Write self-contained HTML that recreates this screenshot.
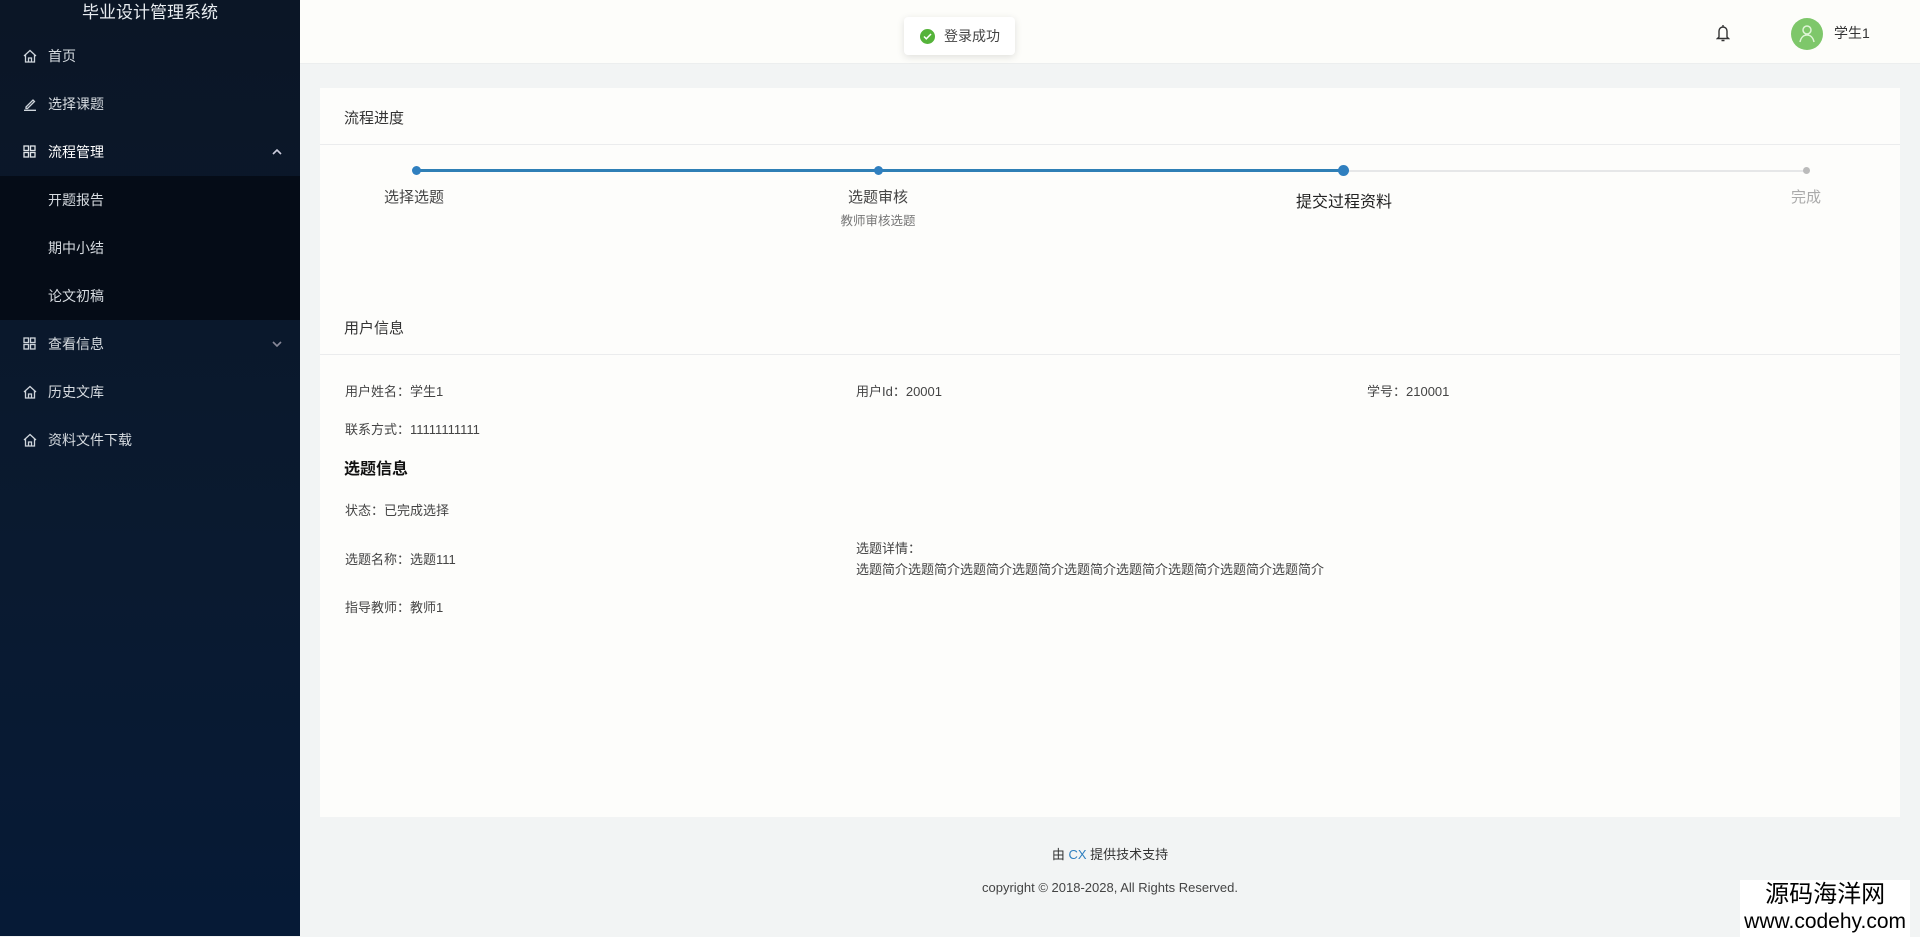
<!DOCTYPE html>
<html><head><meta charset="utf-8"><style>
*{margin:0;padding:0;box-sizing:border-box}
body{width:1920px;height:936px;overflow:hidden;font-family:"Liberation Sans","Noto Sans CJK SC",sans-serif;background:#f2f4f4;position:relative;color:#333}
.side{position:absolute;left:0;top:0;width:300px;height:936px;background:linear-gradient(180deg,#0b1626 0%,#0a1a30 60%,#061a36 100%)}
.title{position:absolute;top:0;left:0;width:300px;text-align:center;color:#e8ecf0;font-size:17px;line-height:26px}
.mi{position:absolute;left:0;width:300px;height:48px;line-height:48px;color:#d6dbe0;font-size:14px;padding-left:48px}
.mi svg{position:absolute;left:23px;top:17px}
.sub{position:absolute;left:0;top:176px;width:300px;height:144px;background:#050c17}
.mi svg.ar{left:auto;right:18px;top:21px}
.hdr{position:absolute;left:300px;top:0;width:1620px;height:64px;background:#fdfdfa;border-bottom:1px solid #eceeee}
.toast{position:absolute;left:904px;top:17px;width:111px;height:38px;background:#fff;box-shadow:0 2px 8px rgba(0,0,0,.12);border-radius:4px;font-size:14px;line-height:38px;padding-left:40px;color:#444}
.toast i{position:absolute;left:16px;top:12px;width:15px;height:15px;border-radius:50%;background:#55b33a}
.card{position:absolute;left:320px;top:88px;width:1580px;height:729px;background:#fdfdfb}
.t{position:absolute;font-size:15px;color:#333}
.hr{position:absolute;left:0;width:1580px;height:1px;background:#ebeced}
.dot{position:absolute;border-radius:50%;background:#2f7fbf}
.lbl{position:absolute;font-size:15px;color:#444;transform:translateX(-50%);white-space:nowrap}
.f{position:absolute;font-size:13px;color:#444;white-space:nowrap}
</style></head><body>
<div class="side">
<div class="title">毕业设计管理系统</div>
<div class="sub"></div>
<div class="mi" style="top:32px"><svg width="14" height="14" viewBox="0 0 14 14" fill="none" stroke="#cfd5dc" stroke-width="1.3"><path d="M1 7L7 1.5 13 7M2.5 5.8V13h9V5.8M5.5 13V9h3v4"/></svg>首页</div>
<div class="mi" style="top:80px"><svg width="14" height="14" viewBox="0 0 14 14" fill="none" stroke="#cfd5dc" stroke-width="1.3"><path d="M3 10L10 3l1.5 1.5L4.5 11.5H3zM1 13.3h12"/></svg>选择课题</div>
<div class="mi" style="top:128px;color:#fff"><svg width="13" height="13" viewBox="0 0 13 13" fill="none" stroke="#e0e4e8" stroke-width="1.3"><rect x="1" y="1" width="4.5" height="4.5"/><rect x="7.5" y="1" width="4.5" height="4.5"/><rect x="1" y="7.5" width="4.5" height="4.5"/><rect x="7.5" y="7.5" width="4.5" height="4.5"/></svg>流程管理<svg class="ar" width="10" height="6" viewBox="0 0 10 6" fill="none" stroke="#ccd" stroke-width="1.6"><path d="M1 5l4-4 4 4"/></svg></div>
<div class="mi" style="top:176px">开题报告</div>
<div class="mi" style="top:224px">期中小结</div>
<div class="mi" style="top:272px">论文初稿</div>
<div class="mi" style="top:320px"><svg width="13" height="13" viewBox="0 0 13 13" fill="none" stroke="#cfd5dc" stroke-width="1.3"><rect x="1" y="1" width="4.5" height="4.5"/><rect x="7.5" y="1" width="4.5" height="4.5"/><rect x="1" y="7.5" width="4.5" height="4.5"/><rect x="7.5" y="7.5" width="4.5" height="4.5"/></svg>查看信息<svg class="ar" width="10" height="6" viewBox="0 0 10 6" fill="none" stroke="#889" stroke-width="1.6"><path d="M1 1l4 4 4-4"/></svg></div>
<div class="mi" style="top:368px"><svg width="14" height="14" viewBox="0 0 14 14" fill="none" stroke="#cfd5dc" stroke-width="1.3"><path d="M1 7L7 1.5 13 7M2.5 5.8V13h9V5.8M5.5 13V9h3v4"/></svg>历史文库</div>
<div class="mi" style="top:416px"><svg width="14" height="14" viewBox="0 0 14 14" fill="none" stroke="#cfd5dc" stroke-width="1.3"><path d="M1 7L7 1.5 13 7M2.5 5.8V13h9V5.8M5.5 13V9h3v4"/></svg>资料文件下载</div>
</div>
<div class="hdr">
<svg style="position:absolute;left:1416px;top:24px" width="14" height="18" viewBox="0 0 14 18" fill="none" stroke="#333" stroke-width="1.4"><path d="M3 13V7a4 4 0 0 1 8 0v6l1.5 1.5h-11zM5.5 16.5h3M7 1v2"/></svg>
<div style="position:absolute;left:1491px;top:18px;width:32px;height:32px;border-radius:50%;background:#7ec76a"><svg width="32" height="32" viewBox="0 0 32 32" fill="none" stroke="#dff5d6" stroke-width="1.5"><circle cx="16" cy="12" r="4"/><path d="M9 24c1-5 4-7 7-7s6 2 7 7"/></svg></div>
<div style="position:absolute;left:1534px;top:23px;font-size:14px;color:#333">学生1</div>
</div>
<div class="toast"><i></i><svg style="position:absolute;left:19px;top:15px" width="9" height="9" viewBox="0 0 9 9" fill="none" stroke="#fff" stroke-width="1.5"><path d="M1 4.5l2.3 2.3L8 2"/></svg>登录成功</div>
<div class="card">
<div class="t" style="left:24px;top:19px">流程进度</div>
<div class="hr" style="top:56px"></div>
<div style="position:absolute;left:100px;top:81px;width:923px;height:3px;background:#2f7fb5"></div>
<div style="position:absolute;left:1027px;top:82px;width:459px;height:2px;background:#e6e7e8"></div>
<div class="dot" style="left:92px;top:78px;width:9px;height:9px"></div>
<div class="dot" style="left:554px;top:78px;width:9px;height:9px"></div>
<div class="dot" style="left:1018px;top:77px;width:11px;height:11px"></div>
<div class="dot" style="left:1483px;top:79px;width:7px;height:7px;background:#bbb"></div>
<div class="lbl" style="left:94px;top:98px">选择选题</div>
<div class="lbl" style="left:558px;top:98px">选题审核</div>
<div class="lbl" style="left:558px;top:122px;font-size:12.5px;color:#777">教师审核选题</div>
<div class="lbl" style="left:1024px;top:100px;color:#222;font-size:16px">提交过程资料</div>
<div class="lbl" style="left:1486px;top:98px;color:#aaa">完成</div>
<div class="t" style="left:24px;top:229px">用户信息</div>
<div class="hr" style="top:266px"></div>
<div class="f" style="left:25px;top:293px">用户姓名：学生1</div>
<div class="f" style="left:536px;top:293px">用户Id：20001</div>
<div class="f" style="left:1047px;top:293px">学号：210001</div>
<div class="f" style="left:25px;top:331px">联系方式：11111111111</div>
<div class="f" style="left:24px;top:367px;font-size:16px;font-weight:bold;color:#111">选题信息</div>
<div class="f" style="left:25px;top:412px">状态：已完成选择</div>
<div class="f" style="left:25px;top:461px">选题名称：选题111</div>
<div class="f" style="left:536px;top:450px">选题详情：</div>
<div class="f" style="left:536px;top:471px">选题简介选题简介选题简介选题简介选题简介选题简介选题简介选题简介选题简介</div>
<div class="f" style="left:25px;top:509px">指导教师：教师1</div>
</div>
<div style="position:absolute;left:300px;width:1620px;top:844px;text-align:center;font-size:13px;color:#333">由 <span style="color:#2f7fbf">CX</span> 提供技术支持</div>
<div style="position:absolute;left:300px;width:1620px;top:880px;text-align:center;font-size:13px;color:#444">copyright © 2018-2028, All Rights Reserved.</div>
<div style="position:absolute;right:10px;top:880px;text-align:center;font-size:24px;line-height:26px;color:#000;background:#fff;padding:2px 4px">源码海洋网<br><span style="font-size:21px">www.codehy.com</span></div>
</body></html>
